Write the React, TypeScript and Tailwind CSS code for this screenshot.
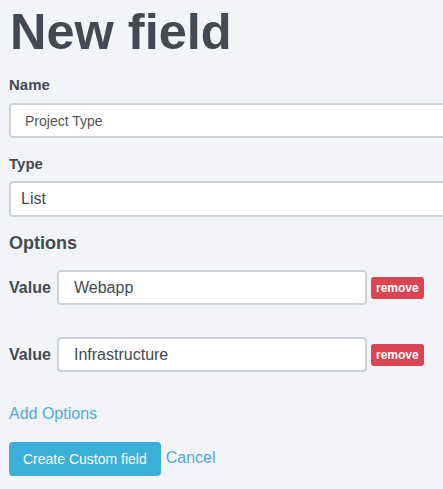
import React from 'react';

const inputBase =
  'h-[35px] bg-white border-2 border-[#ccd1d9] rounded-[4px] text-[#434a54] outline-none';

const OptionRow: React.FC<{ value: string }> = ({ value }) => (
  <div className="flex items-center">
    <label className="w-[48px] text-[16px] font-bold text-[#434a54] leading-6">Value</label>
    <input
      className={`${inputBase} w-[310px] px-[15px] text-[16px]`}
      defaultValue={value}
    />
    <button className="ml-[4px] h-[22px] px-[5px] rounded-[3px] bg-[#da4453] text-white text-[12px] font-bold leading-none">
      remove
    </button>
  </div>
);

const App: React.FC = () => {
  return (
    <div
      className="w-full min-h-[489px] overflow-hidden bg-[#f3f4f8] text-[#434a54] px-[9px] pt-1"
      style={{ fontFamily: '"Liberation Sans", Arial, sans-serif' }}
    >
      {/* 제목 */}
      <h1 className="text-[50.5px] font-bold leading-[55px] pl-[1px]">New field</h1>

      {/* 이름 */}
      <div className="mt-[16px]">
        <label className="block text-[15px] font-bold leading-5 mb-[8px]">Name</label>
        <input
          className={`${inputBase} w-[460px] px-[14px] text-[14px] text-[#555]`}
          defaultValue="Project Type"
        />
      </div>

      {/* 유형 */}
      <div className="mt-[16px]">
        <label className="block text-[15px] font-bold leading-5 mb-[7px]">Type</label>
        <input
          className={`${inputBase} h-[36px] w-[460px] px-[10px] text-[16px]`}
          defaultValue="List"
        />
      </div>

      {/* 옵션 */}
      <h3 className="mt-[14px] text-[18px] font-bold leading-6">Options</h3>
      <div className="mt-[15px] flex flex-col gap-[32px]">
        <OptionRow value="Webapp" />
        <OptionRow value="Infrastructure" />
      </div>

      <a className="block mt-[30px] text-[16px] leading-6 text-[#4fa9da] cursor-pointer">Add Options</a>

      <div className="mt-[16px] flex items-center">
        <button className="h-[34px] px-[14px] rounded-[4px] bg-[#3bafda] text-white text-[14px] leading-none">
          Create Custom field
        </button>
        <a className="ml-[5px] -mt-[3px] text-[16px] text-[#4fa9da] cursor-pointer">Cancel</a>
      </div>
    </div>
  );
};

export default App;
